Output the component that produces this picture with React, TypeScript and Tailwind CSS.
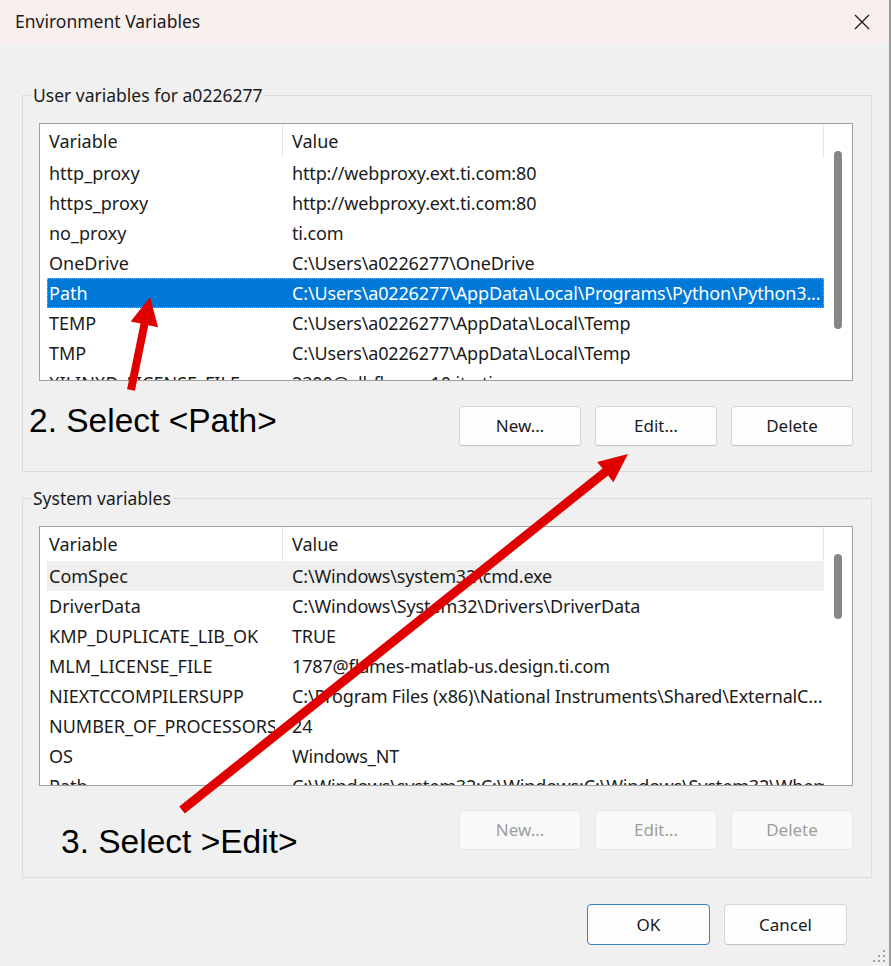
const userVars: [string, string][] = [
  ["http_proxy", "http://webproxy.ext.ti.com:80"],
  ["https_proxy", "http://webproxy.ext.ti.com:80"],
  ["no_proxy", "ti.com"],
  ["OneDrive", "C:\\Users\\a0226277\\OneDrive"],
  ["Path", "C:\\Users\\a0226277\\AppData\\Local\\Programs\\Python\\Python3..."],
  ["TEMP", "C:\\Users\\a0226277\\AppData\\Local\\Temp"],
  ["TMP", "C:\\Users\\a0226277\\AppData\\Local\\Temp"],
  ["XILINXD_LICENSE_FILE", "2300@xlbflexnm10.itg.ti.com"],
];

const systemVars: [string, string][] = [
  ["ComSpec", "C:\\Windows\\system32\\cmd.exe"],
  ["DriverData", "C:\\Windows\\System32\\Drivers\\DriverData"],
  ["KMP_DUPLICATE_LIB_OK", "TRUE"],
  ["MLM_LICENSE_FILE", "1787@flames-matlab-us.design.ti.com"],
  ["NIEXTCCOMPILERSUPP", "C:\\Program Files (x86)\\National Instruments\\Shared\\ExternalC..."],
  ["NUMBER_OF_PROCESSORS", "24"],
  ["OS", "Windows_NT"],
  ["Path", "C:\\Windows\\system32;C:\\Windows;C:\\Windows\\System32\\Wbem;..."],
];

function Row({ name, value, state }: { name: string; value: string; state?: "selected" | "hover" }) {
  const look =
    state === "selected"
      ? "bg-[#0078d7] text-white outline-1 outline-dotted outline-[#e0a05a] -outline-offset-1"
      : state === "hover"
        ? "bg-[#efefef] text-[#1b1b1b]"
        : "text-[#1b1b1b]";
  return (
    <div className={`flex h-[30px] shrink-0 items-center ${look}`}>
      <div className="w-[236px] shrink-0 pl-[2px]">
        <div className="w-[226px] overflow-hidden whitespace-nowrap">{name}</div>
      </div>
      <div className="min-w-0 flex-1 overflow-hidden whitespace-nowrap pl-[9px] tracking-[-0.15px]">{value}</div>
    </div>
  );
}

function VarList({
  rows,
  selected,
  hover,
  height,
  thumb,
}: {
  rows: [string, string][];
  selected?: number;
  hover?: number;
  height: string;
  thumb: string;
}) {
  return (
    <div className={`flex ${height} border border-[#a0a0a0] bg-white text-[18px]`}>
      <div className="ml-[7px] flex w-[777px] flex-col overflow-hidden">
        <div className="flex h-[34px] shrink-0 items-center text-[#1b1b1b]">
          <div className="flex h-full w-[236px] shrink-0 items-center border-r border-[#e5e5e5] pl-[2px]">Variable</div>
          <div className="flex h-full flex-1 items-center border-r border-[#e5e5e5] pl-[9px]">Value</div>
        </div>
        {rows.map(([n, v], i) => (
          <Row key={n + i} name={n} value={v} state={i === selected ? "selected" : i === hover ? "hover" : undefined} />
        ))}
      </div>
      <div className="flex-1 pl-[10px] pt-[27px]">
        <div className={`${thumb} w-[8px] rounded-full bg-[#878787]`} />
      </div>
    </div>
  );
}

function Btn({ label, disabled }: { label: string; disabled?: boolean }) {
  return (
    <div
      className={
        disabled
          ? "flex h-[40px] w-[122px] items-center justify-center rounded-[4px] border border-[#e6e6e6] bg-[#f9f9f9] text-[17px] text-[#9e9e9e]"
          : "flex h-[40px] w-[122px] items-center justify-center rounded-[4px] border border-[#d6d6d6] border-b-[#c2c2c2] bg-[#fdfdfd] text-[17px] text-[#1b1b1b]"
      }
    >
      {label}
    </div>
  );
}

export default function App() {
  return (
    <div
      className="relative h-[966px] w-[891px] overflow-hidden border-r-2 border-[#9a9a9a] bg-[#f0f0f0]"
      style={{ fontFamily: '"Noto Sans", sans-serif' }}
    >
      <div className="flex h-[43px] items-center justify-between bg-[#f9efef] pl-[15px] pr-[19px]">
        <span className="text-[17.5px] text-[#1b1b1b]">Environment Variables</span>
        <svg width="16" height="16" viewBox="0 0 16 16" className="text-[#1b1b1b]">
          <path d="M1 1 L15 15 M15 1 L1 15" stroke="currentColor" strokeWidth="1.3" fill="none" />
        </svg>
      </div>

      <fieldset className="ml-[22px] mt-[40px] w-[850px] border border-[#dcdcdc]">
        <legend className="ml-[8px] px-[2px] text-[17.5px] leading-[24px] text-[#1b1b1b]">User variables for a0226277</legend>
        <div className="pb-[25px] pl-[16px] pr-[18px] pt-[16px]">
          <VarList rows={userVars} selected={4} height="h-[258px]" thumb="h-[178px]" />
          <div className="mt-[25px] flex items-start justify-between">
            <span
              className="-ml-[10px] -mt-[2px] text-[33.5px] leading-[33px] text-black"
              style={{ fontFamily: '"Liberation Sans", Arial, sans-serif' }}
            >
              2. Select &lt;Path&gt;
            </span>
            <div className="flex gap-[14px]">
              <Btn label="New…" />
              <Btn label="Edit…" />
              <Btn label="Delete" />
            </div>
          </div>
        </div>
      </fieldset>

      <fieldset className="ml-[22px] mt-[14px] w-[850px] border border-[#dcdcdc]">
        <legend className="ml-[8px] px-[2px] text-[17.5px] leading-[24px] text-[#1b1b1b]">System variables</legend>
        <div className="pb-[27px] pl-[16px] pr-[18px] pt-[16px]">
          <VarList rows={systemVars} hover={0} height="h-[260px]" thumb="h-[65px]" />
          <div className="mt-[24px] flex items-start justify-between">
            <span
              className="mb-[-8px] ml-[22px] mt-[15px] text-[33.5px] leading-[33px] text-black"
              style={{ fontFamily: '"Liberation Sans", Arial, sans-serif' }}
            >
              3. Select &gt;Edit&gt;
            </span>
            <div className="flex gap-[14px]">
              <Btn label="New…" disabled />
              <Btn label="Edit…" disabled />
              <Btn label="Delete" disabled />
            </div>
          </div>
        </div>
      </fieldset>

      <div className="mt-[26px] flex justify-end gap-[14px] pr-[42px]">
        <div className="flex h-[41px] w-[123px] items-center justify-center rounded-[4px] border border-[#3a80c6] bg-[#fdfdfd] text-[17px] text-[#1b1b1b]">
          OK
        </div>
        <div className="flex h-[41px] w-[123px] items-center justify-center rounded-[4px] border border-[#d6d6d6] border-b-[#c2c2c2] bg-[#fdfdfd] text-[17px] text-[#1b1b1b]">
          Cancel
        </div>
      </div>

      <svg className="absolute bottom-[2px] right-[2px]" width="14" height="14" viewBox="0 0 14 14">
        <rect x="10" y="0" width="2" height="2" fill="#a0a0a0" />
        <rect x="5" y="5" width="2" height="2" fill="#a0a0a0" />
        <rect x="10" y="5" width="2" height="2" fill="#a0a0a0" />
        <rect x="0" y="10" width="2" height="2" fill="#a0a0a0" />
        <rect x="5" y="10" width="2" height="2" fill="#a0a0a0" />
        <rect x="10" y="10" width="2" height="2" fill="#a0a0a0" />
      </svg>

      {/* annotation arrows */}
      <svg className="pointer-events-none absolute inset-0" width="891" height="966" viewBox="0 0 891 966">
        <polygon
          points="127.1,389.2 134.9,390.8 148.3,325.2 158.1,327.2 150,297 130.7,321.6 140.5,323.6"
          fill="#e00000"
        />
        <polygon
          points="179.2,806.5 184.8,813.5 608.1,475.6 613.4,482.3 628,454 597.2,461.9 602.5,468.6"
          fill="#e00000"
        />
      </svg>
    </div>
  );
}
